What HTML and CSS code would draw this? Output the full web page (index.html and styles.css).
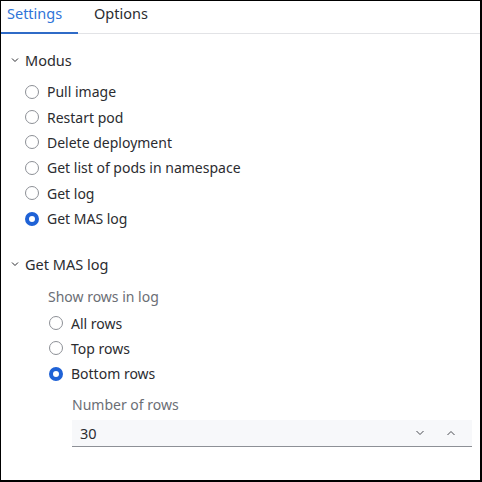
FILE: index.html
```html
<!DOCTYPE html>
<html>
<head>
<meta charset="utf-8">
<link rel="stylesheet" href="styles.css">
</head>
<body>
<div class="frame">
  <div class="tabs">
    <div class="tab active">Settings</div>
    <div class="tab">Options</div>
  </div>
  <div class="section">
    <div class="sec-head"><span class="chev"><svg width="8" height="6" viewBox="0 0 8 6"><path d="M1 1.5 L4 4.5 L7 1.5" fill="none" stroke="#2b2c30" stroke-width="1"/></svg></span>Modus</div>
    <div class="radios top">
      <label class="radio"><span class="dot"></span>Pull image</label>
      <label class="radio"><span class="dot"></span>Restart pod</label>
      <label class="radio"><span class="dot"></span>Delete deployment</label>
      <label class="radio"><span class="dot"></span>Get list of pods in namespace</label>
      <label class="radio"><span class="dot"></span>Get log</label>
      <label class="radio"><span class="dot on"></span>Get MAS log</label>
    </div>
  </div>
  <div class="section second">
    <div class="sec-head"><span class="chev"><svg width="8" height="6" viewBox="0 0 8 6"><path d="M1 1.5 L4 4.5 L7 1.5" fill="none" stroke="#2b2c30" stroke-width="1"/></svg></span>Get MAS log</div>
    <div class="group">
      <div class="glabel">Show rows in log</div>
      <div class="radios">
        <label class="radio"><span class="dot"></span>All rows</label>
        <label class="radio"><span class="dot"></span>Top rows</label>
        <label class="radio"><span class="dot on"></span>Bottom rows</label>
      </div>
      <div class="field">
        <div class="glabel">Number of rows</div>
        <div class="input">
          <span class="val">30</span>
          <span class="btns">
            <svg width="10" height="6" viewBox="0 0 10 6"><path d="M1.5 1 L5 4.5 L8.5 1" fill="none" stroke="#4a4c52" stroke-width="1"/></svg>
            <svg width="10" height="6" viewBox="0 0 10 6"><path d="M1.5 5 L5 1.5 L8.5 5" fill="none" stroke="#4a4c52" stroke-width="1"/></svg>
          </span>
        </div>
      </div>
    </div>
  </div>
</div>
</body>
</html>
```
FILE: styles.css
```css
* { box-sizing: border-box; }
html, body { margin: 0; padding: 0; background: #fff; }
body { font-family: "Noto Sans", "Open Sans", sans-serif; font-size: 14px; color: #2b2c30; }
.frame {
  width: 482px; height: 482px;
  border: 1px solid #000;
  border-right-width: 2px; border-bottom-width: 2px;
  overflow: hidden;
}
.tabs { display: flex; border-bottom: 1px solid #e2e3e6; height: 33px; }
.tab { padding: 2px 16px 0 16px; line-height: 20px; font-size: 14.5px; }
.tab.active { color: #2f74d8; padding-left: 6px; width: 77px; border-bottom: 2px solid #2f6bc7; margin-bottom: -1px; }
.section { padding: 15px 0 0 8px; }
.section.second { padding-top: 22px; }
.sec-head { display: flex; align-items: center; height: 22px; font-size: 14.5px; }
.chev { width: 16px; display: flex; align-items: center; padding-left: 2px; }
.radios { display: flex; flex-direction: column; }
.radios.top { padding: 8px 0 0 16px; }
.radio { display: flex; align-items: center; height: 25.4px; gap: 8px; font-size: 14px; }
.dot { width: 14px; height: 14px; border-radius: 50%; border: 1px solid #8d9096; flex: none; }
.dot.on { border: 4px solid #1f62d6; }
.group { padding: 11px 0 0 39px; }
.glabel { color: #6b6e75; height: 22px; line-height: 22px; font-size: 14px; }
.group .radios { padding: 2px 0 0 1px; }
.field { padding: 8px 0 0 24px; }
.field .glabel { height: 20px; line-height: 20px; }
.input {
  margin-top: 5px; width: 400px; height: 27px;
  background: #f7f8fa; border-bottom: 1px solid #8d9096;
  display: flex; align-items: center; justify-content: space-between;
  padding: 0 16px 0 8px;
}
.val { font-size: 14.5px; color: #2b2c30; }
.btns { display: flex; gap: 21px; align-items: center; }
```
